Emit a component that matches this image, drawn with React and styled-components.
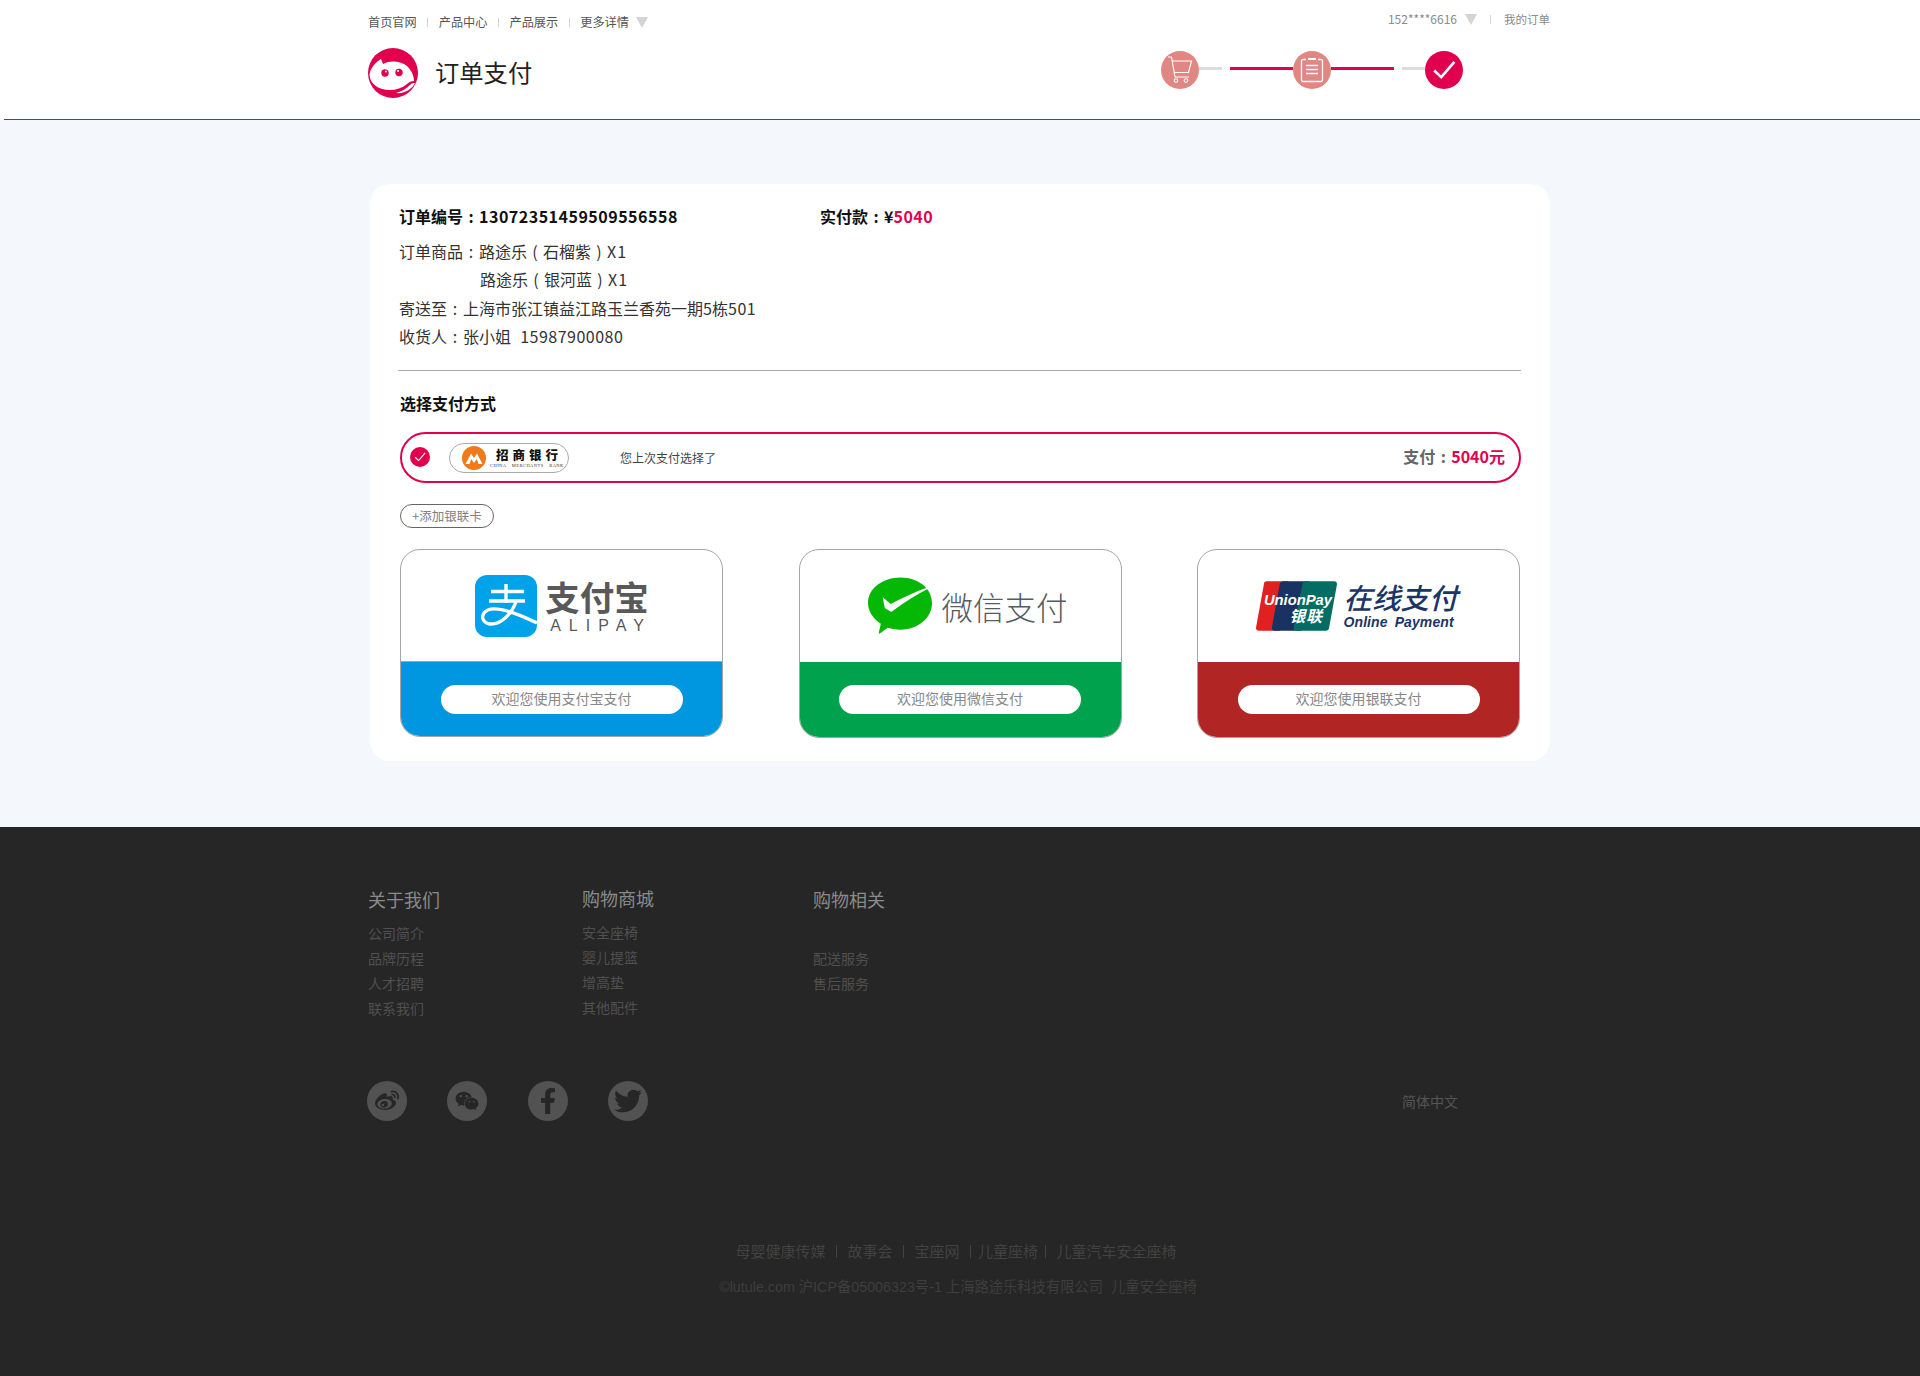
import React from 'react';
import styled, { createGlobalStyle } from 'styled-components';
import { FaWeibo, FaWeixin, FaFacebookF, FaTwitter } from 'react-icons/fa';

const Global = createGlobalStyle`
  html, body { margin: 0; padding: 0; background: #fff; }
  body { font-family: "Noto Sans CJK SC", "Noto Sans", sans-serif; color: #333; }
  * { box-sizing: border-box; }
`;

const Page = styled.div`
  width: 1920px;
  min-height: 1376px;
  display: flex;
  flex-direction: column;
`;

const Header = styled.header`
  height: 120px;
  margin-left: 4px;
  border-bottom: 1px solid #c2134a;
  padding: 12px 370px 0 364px;
  background: #fff;
`;

const TopRow = styled.div`
  display: flex;
  justify-content: space-between;
  height: 20px;
`;

const NavGroup = styled.nav`
  display: flex;
  align-items: center;
  height: 20px;
  margin-top: ${p => p.$muted ? -3 : 0}px;
  line-height: 20px;
  color: ${p => p.$muted ? '#8a8a8a' : '#555'};
`;

const NavLink = styled.span`
  white-space: nowrap;
  font-size: ${p => p.$size || 12.2}px;
`;

const NavSep = styled.i`
  display: block;
  width: 1px;
  height: 9px;
  margin: 0 ${p => p.$gap || 10.5}px;
  background: #d4d4d4;
`;

const Caret = styled.i`
  display: block;
  margin-left: ${p => p.$left || 7}px;
  width: 0;
  height: 0;
  border-left: 6px solid transparent;
  border-right: 6px solid transparent;
  border-top: 11px solid #d4d4d4;
`;

const BrandRow = styled.div`
  display: flex;
  justify-content: space-between;
  margin-top: 16px;
`;

const Brand = styled.div`
  display: flex;
  align-items: center;
  gap: 17px;
`;

const Title = styled.h1`
  margin: -2px 0 0;
  font-size: 24.3px;
  font-weight: 400;
  line-height: 50px;
  color: #222;
`;

const Steps = styled.div`
  display: flex;
  align-items: center;
  height: 38px;
  margin: 3px 87px 0 0;
`;

const StepDot = styled.span`
  width: 38px;
  height: 38px;
  border-radius: 50%;
  background: ${p => p.$done ? '#e0004d' : '#e08683'};
  display: flex;
  align-items: center;
  justify-content: center;
`;

const StepLine = styled.i`
  display: block;
  width: ${p => p.$w}px;
  height: 2.5px;
  margin: -3px 0 0 ${p => p.$left || 0}px;
  background: ${p => p.$red ? '#e0004d' : '#dcdcdc'};
`;

const Main = styled.main`
  background: #f4f8fd;
  padding: 64px 370px 66px;
  height: 707px;
`;

const Panel = styled.section`
  background: #fff;
  border-radius: 20px;
  height: 577px;
  padding: 20px 29px 0 29px;
`;

const OrderHead = styled.div`
  display: flex;
  font-size: 16px;
  font-weight: 700;
  line-height: 24px;
  color: #111;
`;

const OrderNo = styled.div`
  width: 421px;
  white-space: nowrap;
`;

const Cell = styled.span`
  display: inline-block;
  width: 1em;
  text-align: center;
  font-weight: inherit;
`;

const Digits = styled.span`
  letter-spacing: ${p => p.$ls || 0.5}px;
  margin-left: ${p => p.$left || 0}px;
`;

const Red = styled.span`
  color: #e0004d;
  letter-spacing: ${p => p.$ls || 0}px;
`;

const Details = styled.div`
  margin-top: 9px;
  font-size: 16px;
  line-height: 28.3px;
  color: #333;
`;

const DetailLine = styled.div`
  padding-left: ${p => p.$indent || 0}px;
  white-space: nowrap;
`;

const Divider = styled.hr`
  border: 0;
  height: 1px;
  background: #aaa;
  margin: 20px 0 0 -1px;
  width: 1123px;
`;

const SectionTitle = styled.h2`
  margin: 20px 0 0 1px;
  font-size: 16px;
  font-weight: 700;
  line-height: 24px;
  color: #111;
`;

const PayRow = styled.div`
  margin: 17px 0 0 1px;
  width: 1121px;
  height: 51px;
  border: 2px solid #e0004d;
  border-radius: 26px;
  display: flex;
  align-items: center;
  padding: 0 14px 0 8px;
`;

const CheckDot = styled.span`
  width: 20px;
  height: 20px;
  margin-top: -1px;
  border-radius: 50%;
  background: #e0004d;
  display: flex;
  align-items: center;
  justify-content: center;
  flex: none;
`;

const BankPill = styled.div`
  margin-left: 19px;
  width: 120px;
  height: 30px;
  border: 1px solid #aaa;
  border-radius: 15px;
  display: flex;
  align-items: center;
  padding-left: 12px;
  gap: 4px;
  flex: none;
`;

const BankName = styled.div`
  display: flex;
  flex-direction: column;
  align-items: center;
  height: 22px;
`;

const BankCn = styled.span`
  font-family: "Noto Sans CJK SC", sans-serif;
  font-size: 12.5px;
  font-weight: 900;
  line-height: 15px;
  letter-spacing: 4px;
  margin-right: -4px;
  color: #111;
`;

const BankEn = styled.span`
  font-family: "Liberation Serif", serif;
  font-size: 4.5px;
  line-height: 7px;
  word-spacing: 4px;
  letter-spacing: 0.45px;
  color: #333;
  white-space: nowrap;
`;

const LastUsed = styled.span`
  margin-left: 51px;
  font-size: 12px;
  color: #444;
`;

const PayAmount = styled.span`
  margin-left: auto;
  padding-bottom: 3px;
  font-size: 16px;
  font-weight: 700;
  color: #666;
`;

const AddCard = styled.button`
  display: block;
  margin: 21px 0 0 1px;
  width: 94px;
  height: 24px;
  border: 1px solid #666;
  border-radius: 12px;
  background: #fff;
  font: 12.5px/20px "Noto Sans CJK SC", sans-serif;
  color: #808080;
  padding: 0;
`;

const Methods = styled.div`
  display: grid;
  grid-template-columns: repeat(3, 323px);
  column-gap: 75.5px;
  margin: 21px 0 0 1px;
`;

const Method = styled.article`
  height: ${p => p.$h || 189}px;
  border: 1px solid #a5a5a5;
  border-radius: 20px;
  overflow: hidden;
  display: flex;
  flex-direction: column;
  background: #fff;
`;

const MethodLogo = styled.div`
  height: ${p => p.$h || 112}px;
  flex: none;
  display: flex;
  align-items: center;
  justify-content: center;
`;

const MethodFoot = styled.div`
  flex: 1;
  background: ${p => p.$bg};
  border-top: ${p => p.$line ? '1px solid #a5a5a5' : '0'};
  display: flex;
  justify-content: center;
  padding-top: 23px;
`;

const WelcomePill = styled.div`
  width: 242px;
  height: 29px;
  border-radius: 15px;
  background: #fff;
  font-size: 14px;
  line-height: 27px;
  text-align: center;
  color: #888;
`;

const AliWrap = styled.div`
  display: flex;
  align-items: center;
  gap: 8px;
  margin-left: 1px;
`;

const AliText = styled.div`
  display: flex;
  flex-direction: column;
  align-items: center;
`;

const AliCn = styled.span`
  font-size: 34.5px;
  font-weight: 700;
  line-height: 38px;
  color: #595959;
`;

const AliEn = styled.span`
  font-family: "Liberation Sans", sans-serif;
  font-size: 16px;
  line-height: 16px;
  letter-spacing: 8px;
  margin-right: -8px;
  color: #595959;
  margin-top: 3px;
`;

const WxWrap = styled.div`
  display: flex;
  align-items: center;
  gap: 8px;
  margin-left: 16px;
`;

const WxText = styled.span`
  font-size: 31.5px;
  font-weight: 300;
  color: #545c60;
  line-height: 40px;
`;

const UpWrap = styled.div`
  display: flex;
  align-items: center;
  gap: 6px;
  margin-left: -3px;
`;

const UpText = styled.div`
  display: flex;
  flex-direction: column;
  align-items: flex-start;
`;

const UpCn = styled.span`
  font-size: 28.5px;
  line-height: 31px;
  font-style: italic;
  font-weight: 500;
  color: #1c3563;
`;

const UpEn = styled.span`
  font-family: "Liberation Sans", sans-serif;
  font-size: 14px;
  line-height: 20px;
  font-style: italic;
  font-weight: 700;
  color: #1c3563;
  word-spacing: 3px;
  letter-spacing: 0.1px;
`;

const Footer = styled.footer`
  flex: 1;
  background: #262626;
  padding: 58px 0 0 368px;
  height: 549px;
`;

const FootCols = styled.div`
  display: flex;
  height: 176px;
`;

const FootCol = styled.div`
  width: ${p => p.$w}px;
  margin-top: ${p => p.$shift || 0}px;
`;

const FootHead = styled.h3`
  margin: -1px 0 0;
  font-size: 18px;
  font-weight: 400;
  line-height: 30px;
  color: #8a8a8a;
`;

const FootList = styled.ul`
  list-style: none;
  margin: ${p => p.$top || 0}px 0 0;
  padding: 0;
`;

const FootItem = styled.li`
  font-size: 14px;
  line-height: 25px;
  color: #505050;
`;

const SocialRow = styled.div`
  display: flex;
  align-items: center;
  width: 1091px;
  margin: 20px 0 0 -1px;
`;

const Social = styled.span`
  width: 40px;
  height: 40px;
  margin-right: 40.4px;
  border-radius: 50%;
  background: #525252;
  color: #262626;
  display: flex;
  align-items: center;
  justify-content: center;
  font-size: ${p => p.$size || 24}px;
`;

const Lang = styled.span`
  margin-left: auto;
  font-size: 14px;
  color: #555;
`;

const Legal = styled.div`
  margin: 106px 0 0 -368px;
  padding-right: 4px;
  display: flex;
  flex-direction: column;
  align-items: center;
  color: #424242;
`;

const LegalLinks = styled.div`
  display: flex;
  align-items: center;
  height: 48px;
  margin-right: 4px;
  font-size: 15px;
  line-height: 24px;
  white-space: nowrap;
`;

const LegalSep = styled.i`
  display: block;
  width: 1px;
  height: 13px;
  margin: 0 ${p => p.$r || 10.5}px 0 ${p => p.$l || 10.5}px;
  background: #424242;
`;

const Copyright = styled.div`
  font-family: "Liberation Sans", "Noto Sans CJK SC", sans-serif;
  font-size: 14.3px;
  line-height: 24px;
  white-space: pre;
  color: #3e3e3e;
`;

const Logo = () => (
  <svg width="50" height="50" viewBox="0 0 50 50">
    <circle cx="25" cy="25" r="25" fill="#e0004d" />
    <path d="M1.5 27C2 20 8 14 13 11l2 5c7-4 18-3 24 2 4 4 7 9 7 15-3 0-5 1-7 3-5 4-11 6-17 6C11 42 2 36 1.5 27z" fill="#fff" />
    <path d="M28 45c7-2 11-5 14-8 2-2 4-2 5-2-3 6-10 11-19 10z" fill="#fff" />
    <circle cx="17" cy="25" r="3.7" fill="#e0004d" />
    <circle cx="31" cy="24.5" r="3.7" fill="#e0004d" />
    <circle cx="18" cy="23.5" r="1" fill="#fff" />
    <circle cx="30" cy="23" r="1" fill="#fff" />
  </svg>
);

const CartIcon = () => (
  <svg width="26" height="28" viewBox="0 0 26 28" fill="none" stroke="#fff" strokeWidth="1.1">
    <path d="M1 1h3.5l3.500 20h14" />
    <path d="M4.800 5h19.700l-3 11.500H6.800" />
    <circle cx="9" cy="24.500" r="1.800" />
    <circle cx="19" cy="24.500" r="1.800" />
  </svg>
);

const ClipIcon = () => (
  <svg width="24" height="26" viewBox="0 0 24 26" fill="none" stroke="#fff" strokeWidth="1.3">
    <path d="M6 2.500H3a1.500 1.500 0 0 0-1.500 1.500v19A1.500 1.500 0 0 0 3 24.500h18a1.500 1.500 0 0 0 1.500-1.500V4A1.500 1.500 0 0 0 21 2.500h-3" />
    <path d="M8 2h8" strokeWidth="2" />
    <path d="M6 8.500h12M6 12.500h12M6 16.500h12" strokeWidth="1.5" />
  </svg>
);

const CheckIcon = ({ size = 24, width = 2.4 }) => (
  <svg width={size} height={size} viewBox="0 0 22 22" fill="none" stroke="#fff" strokeWidth={width}>
    <path d="M2 11.500l6.500 6L20.500 3.500" />
  </svg>
);

const CmbLogo = () => (
  <svg width="24" height="24" viewBox="0 0 24 24">
    <circle cx="12" cy="12" r="12" fill="#ee7a1c" />
    <path d="M3.500 18L9 7.500l3 4.500 3-4.500L20.500 18h-4L14.800 13 12 17l-2.800-4-1.700 5z" fill="#fff" />
  </svg>
);

const AliIcon = () => (
  <svg width="62" height="62" viewBox="0 0 62 62">
    <rect width="62" height="62" rx="12" fill="#00a2ea" />
    <g fill="none" stroke="#fff" strokeWidth="3.4">
      <path d="M16 16.500h33M31 9v19M14 26h36" />
      <path d="M41 27C36 40 25 50 15 49 8 48 6 42 9 38c5-7 20-6 53 10" />
    </g>
  </svg>
);

const WxIcon = () => (
  <svg width="65" height="58" viewBox="0 0 66 58">
    <path d="M33 0c18 0 32 11 32 26S51 53 33 53c-5 0-9-1-13-2L12 57c-1 0-1 0-1-1l2-9C5 42 0 34 0 26 0 11 15 0 33 0z" fill="#06b806" />
    <path d="M15 20l8 7c12-6 24-12 38-17l1 1c-12 6-25 14-37 23-1 1-2 1-3 0l-5-3z" fill="#fff" />
  </svg>
);

const UpCard = styled.svg`
  display: block;
`;

const UpLabel = styled.text`
  font-family: "Liberation Sans", sans-serif;
  font-weight: 700;
  font-style: italic;
  fill: #fff;
`;

const UpLabelCn = styled.text`
  font-family: "Noto Sans CJK SC", sans-serif;
  font-weight: 700;
  font-style: italic;
  fill: #fff;
`;

const UnionIcon = () => (
  <UpCard width="81" height="52" viewBox="0 0 82 52">
    <path d="M11 1h22L24 51H3c-2 0-3-1-3-3L8 4c0-2 1-3 3-3z" fill="#e1211f" />
    <path d="M28 1h26L46 51H19c-2 0-3-1-3-3l8-44c0-2 2-3 4-3z" fill="#193262" />
    <path d="M51 1h28c2 0 3 1 3 3l-8 44c0 2-2 3-3 3H41c-2 0-3-1-3-3l9-44c0-2 2-3 4-3z" fill="#046c63" />
    <UpLabel x="8" y="25" fontSize="15" textLength="69">UnionPay</UpLabel>
    <UpLabelCn x="34" y="42" fontSize="16" textLength="33">银联</UpLabelCn>
  </UpCard>
);

export default function App() {
  return (
    <Page>
      <Global />
      <Header>
        <TopRow>
          <NavGroup>
            <NavLink>首页官网</NavLink><NavSep />
            <NavLink>产品中心</NavLink><NavSep />
            <NavLink>产品展示</NavLink><NavSep />
            <NavLink>更多详情</NavLink><Caret />
          </NavGroup>
          <NavGroup $muted>
            <NavLink $size={12}>152****6616</NavLink><Caret $left={8} />
            <NavSep $gap={13} />
            <NavLink $size={11.5}>我的订单</NavLink>
          </NavGroup>
        </TopRow>
        <BrandRow>
          <Brand>
            <Logo />
            <Title>订单支付</Title>
          </Brand>
          <Steps>
            <StepDot><CartIcon /></StepDot>
            <StepLine $w={23} />
            <StepLine $w={63} $red $left={8} />
            <StepDot><ClipIcon /></StepDot>
            <StepLine $w={63} $red />
            <StepLine $w={23} $left={8} />
            <StepDot $done><CheckIcon /></StepDot>
          </Steps>
        </BrandRow>
      </Header>

      <Main>
        <Panel>
          <OrderHead>
            <OrderNo>订单编号<Cell>:</Cell><Digits>13072351459509556558</Digits></OrderNo>
            <div>实付款<Cell>:</Cell>¥<Red $ls={0.5}>5040</Red></div>
          </OrderHead>
          <Details>
            <DetailLine>订单商品<Cell>:</Cell>路途乐<Cell>(</Cell>石榴紫<Cell>)</Cell><Digits $ls={1}>X1</Digits></DetailLine>
            <DetailLine $indent={81}>路途乐<Cell>(</Cell>银河蓝<Cell>)</Cell><Digits $ls={1}>X1</Digits></DetailLine>
            <DetailLine>寄送至<Cell>:</Cell>上海市张江镇益江路玉兰香苑一期5栋<Digits $ls={0.6}>501</Digits></DetailLine>
            <DetailLine>收货人<Cell>:</Cell>张小姐&nbsp;&nbsp;<Digits $ls={0.5} $left={2}>15987900080</Digits></DetailLine>
          </Details>
          <Divider />
          <SectionTitle>选择支付方式</SectionTitle>
          <PayRow>
            <CheckDot><CheckIcon size={12} width={2} /></CheckDot>
            <BankPill>
              <CmbLogo />
              <BankName>
                <BankCn>招商银行</BankCn>
                <BankEn>CHINA MERCHANTS BANK</BankEn>
              </BankName>
            </BankPill>
            <LastUsed>您上次支付选择了</LastUsed>
            <PayAmount>支付<Cell>:</Cell><Red>5040元</Red></PayAmount>
          </PayRow>
          <AddCard>+添加银联卡</AddCard>
          <Methods>
            <Method $h={188}>
              <MethodLogo $h={111}>
                <AliWrap>
                  <AliIcon />
                  <AliText>
                    <AliCn>支付宝</AliCn>
                    <AliEn>ALIPAY</AliEn>
                  </AliText>
                </AliWrap>
              </MethodLogo>
              <MethodFoot $bg="#0096e0" $line><WelcomePill>欢迎您使用支付宝支付</WelcomePill></MethodFoot>
            </Method>
            <Method>
              <MethodLogo>
                <WxWrap>
                  <WxIcon />
                  <WxText>微信支付</WxText>
                </WxWrap>
              </MethodLogo>
              <MethodFoot $bg="#00a24e"><WelcomePill>欢迎您使用微信支付</WelcomePill></MethodFoot>
            </Method>
            <Method>
              <MethodLogo>
                <UpWrap>
                  <UnionIcon />
                  <UpText>
                    <UpCn>在线支付</UpCn>
                    <UpEn>Online Payment</UpEn>
                  </UpText>
                </UpWrap>
              </MethodLogo>
              <MethodFoot $bg="#b22525"><WelcomePill>欢迎您使用银联支付</WelcomePill></MethodFoot>
            </Method>
          </Methods>
        </Panel>
      </Main>

      <Footer>
        <FootCols>
          <FootCol $w={214}>
            <FootHead>关于我们</FootHead>
            <FootList $top={7}>
              <FootItem>公司简介</FootItem>
              <FootItem>品牌历程</FootItem>
              <FootItem>人才招聘</FootItem>
              <FootItem>联系我们</FootItem>
            </FootList>
          </FootCol>
          <FootCol $w={231} $shift={-1}>
            <FootHead>购物商城</FootHead>
            <FootList $top={7}>
              <FootItem>安全座椅</FootItem>
              <FootItem>婴儿提篮</FootItem>
              <FootItem>增高垫</FootItem>
              <FootItem>其他配件</FootItem>
            </FootList>
          </FootCol>
          <FootCol $w={200}>
            <FootHead>购物相关</FootHead>
            <FootList $top={32}>
              <FootItem>配送服务</FootItem>
              <FootItem>售后服务</FootItem>
            </FootList>
          </FootCol>
        </FootCols>
        <SocialRow>
          <Social><FaWeibo /></Social>
          <Social><FaWeixin /></Social>
          <Social $size={26}><FaFacebookF /></Social>
          <Social $size={28}><FaTwitter /></Social>
          <Lang>简体中文</Lang>
        </SocialRow>
        <Legal>
          <LegalLinks>
            <span>母婴健康传媒</span><LegalSep />
            <span>故事会</span><LegalSep />
            <span>宝座网</span><LegalSep $r={7} />
            <span>儿童座椅</span><LegalSep $l={7} />
            <span>儿童汽车安全座椅</span>
          </LegalLinks>
          <Copyright>©lutule.com 沪ICP备05006323号-1 上海路途乐科技有限公司  儿童安全座椅</Copyright>
        </Legal>
      </Footer>
    </Page>
  );
}
